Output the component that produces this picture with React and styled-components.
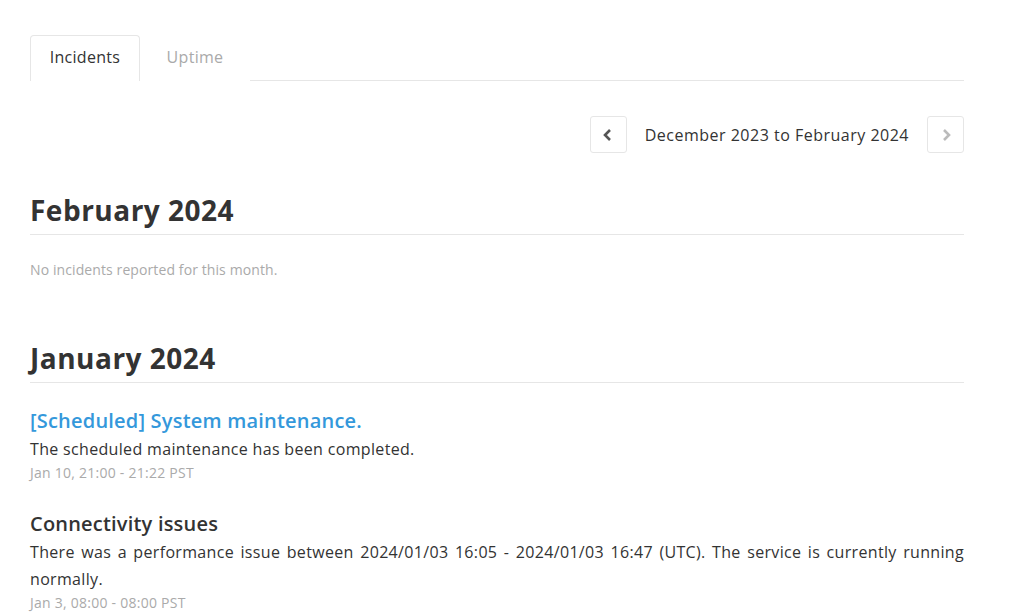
import styled, { createGlobalStyle } from "styled-components";

const Global = createGlobalStyle`
  body {
    margin: 0;
    background: #fff;
    font-family: "Open Sans", Lato, sans-serif;
    color: #333;
  }
`;

const Page = styled.div`
  width: 934px;
  padding: 35px 0 0 30px;
`;

const Tabs = styled.div`
  display: flex;
  border-bottom: 1px solid #e6e6e6;
  height: 45px;
`;

const Tab = styled.div`
  width: 110px;
  box-sizing: border-box;
  display: flex;
  align-items: center;
  justify-content: center;
  padding-bottom: 4px;
  font-size: 16px;
  letter-spacing: 0.3px;
  color: ${(p) => (p.active ? "#333" : "#aaa")};
  border: 1px solid ${(p) => (p.active ? "#e6e6e6" : "transparent")};
  border-bottom: none;
  border-radius: 4px 4px 0 0;
  background: #fff;
  margin-bottom: -1px;
  height: 46px;
`;

const Pager = styled.div`
  display: flex;
  justify-content: flex-end;
  align-items: center;
  margin-top: 35px;
  gap: 18px;
`;

const PageBtn = styled.div`
  width: 37px;
  height: 37px;
  box-sizing: border-box;
  border: 1px solid #e6e6e6;
  border-radius: 3px;
  display: flex;
  align-items: center;
  justify-content: center;
  color: ${(p) => (p.disabled ? "#bbb" : "#555")};
`;

const Range = styled.div`
  font-size: 16px;
  letter-spacing: 0.5px;
  color: #333;
`;

const Month = styled.section`
  margin-top: ${(p) => p.top}px;
`;

const MonthTitle = styled.h2`
  margin: 0;
  font-size: 28px;
  line-height: 34px;
  font-weight: 700;
  letter-spacing: 0.5px;
  color: #333;
  padding-bottom: 7px;
  border-bottom: 1px solid #e6e6e6;
`;

const Empty = styled.p`
  margin: 26px 0 0;
  font-size: 14px;
  line-height: 18px;
  letter-spacing: 0.1px;
  color: #aaa;
`;

const Incident = styled.div`
  margin-top: ${(p) => p.top}px;
`;

const Title = styled.div`
  font-size: 20px;
  line-height: 28px;
  font-weight: 600;
  letter-spacing: 0.2px;
  color: ${(p) => (p.link ? "#3498db" : "#333")};
`;

const Body = styled.p`
  margin: 1px 0 0;
  font-size: 16px;
  line-height: 27px;
  letter-spacing: 0.33px;
  text-align: justify;
  color: #333;
`;

const When = styled.div`
  font-size: 14px;
  line-height: 20px;
  letter-spacing: 0.25px;
  color: #aaa;
`;

const Chevron = ({ dir }) => (
  <svg width="12" height="14" viewBox="0 0 12 14">
    <path
      d={dir === "left" ? "M8 2 L3 7 L8 12" : "M4 2 L9 7 L4 12"}
      fill="none"
      stroke="currentColor"
      strokeWidth="2.6"
    />
  </svg>
);

export default function App() {
  return (
    <Page>
      <Global />
      <Tabs>
        <Tab active>Incidents</Tab>
        <Tab>Uptime</Tab>
      </Tabs>
      <Pager>
        <PageBtn>
          <Chevron dir="left" />
        </PageBtn>
        <Range>December 2023 to February 2024</Range>
        <PageBtn disabled>
          <Chevron dir="right" />
        </PageBtn>
      </Pager>
      <Month top={40}>
        <MonthTitle>February 2024</MonthTitle>
        <Empty>No incidents reported for this month.</Empty>
      </Month>
      <Month top={62}>
        <MonthTitle>January 2024</MonthTitle>
        <Incident top={24}>
          <Title link>[Scheduled] System maintenance.</Title>
          <Body>The scheduled maintenance has been completed.</Body>
          <When>Jan 10, 21:00 - 21:22 PST</When>
        </Incident>
        <Incident top={27}>
          <Title>Connectivity issues</Title>
          <Body>
            There was a performance issue between 2024/01/03 16:05 - 2024/01/03
            16:47 (UTC). The service is currently running normally.
          </Body>
          <When>Jan 3, 08:00 - 08:00 PST</When>
        </Incident>
      </Month>
    </Page>
  );
}
